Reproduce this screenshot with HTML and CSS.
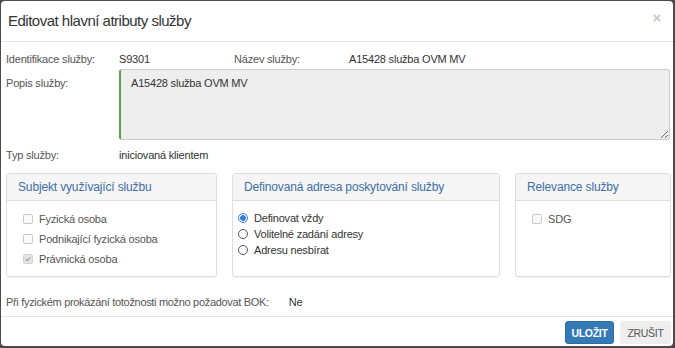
FILE: index.html
```html
<!DOCTYPE html>
<html lang="cs">
<head>
<meta charset="utf-8">
<link rel="stylesheet" href="styles.css">
</head>
<body>
<div class="modal">
  <div class="modal-header">
    <h4 class="modal-title">Editovat hlavní atributy služby</h4>
    <span class="close">×</span>
  </div>
  <div class="modal-body">
    <div class="row4">
      <span class="lbl">Identifikace služby:</span>
      <span class="val">S9301</span>
      <span class="lbl">Název služby:</span>
      <span class="val">A15428 služba OVM MV</span>
    </div>
    <div class="row-desc">
      <span class="lbl lbl-desc">Popis služby:</span>
      <textarea class="desc" readonly>A15428 služba OVM MV</textarea>
    </div>
    <div class="row2">
      <span class="lbl">Typ služby:</span>
      <span class="val">iniciovaná klientem</span>
    </div>
    <div class="panels">
      <div class="panel">
        <div class="panel-heading">Subjekt využívající službu</div>
        <div class="panel-body">
          <div class="chk-row"><span class="chk"></span>Fyzická osoba</div>
          <div class="chk-row"><span class="chk"></span>Podnikající fyzická osoba</div>
          <div class="chk-row"><span class="chk checked"><svg viewBox="0 0 10 10" width="10" height="10"><path d="M2.2 5.2 L4.2 7.2 L7.9 2.8" fill="none" stroke="#9a9a9a" stroke-width="1.4"/></svg></span>Právnická osoba</div>
        </div>
      </div>
      <div class="panel">
        <div class="panel-heading">Definovaná adresa poskytování služby</div>
        <div class="panel-body radios">
          <div class="radio-row"><span class="radio on"></span>Definovat vždy</div>
          <div class="radio-row"><span class="radio"></span>Volitelné zadání adresy</div>
          <div class="radio-row"><span class="radio"></span>Adresu nesbírat</div>
        </div>
      </div>
      <div class="panel">
        <div class="panel-heading">Relevance služby</div>
        <div class="panel-body">
          <div class="chk-row"><span class="chk"></span>SDG</div>
        </div>
      </div>
    </div>
    <div class="row-bok">
      <span class="lbl bok-lbl">Při fyzickém prokázání totožnosti možno požadovat BOK:</span>
      <span class="val">Ne</span>
    </div>
  </div>
  <div class="modal-footer">
    <button class="btn btn-primary">ULOŽIT</button>
    <button class="btn btn-default">ZRUŠIT</button>
  </div>
</div>
</body>
</html>
```

FILE: styles.css
```css
* { box-sizing: border-box; }
html, body { margin: 0; padding: 0; }
body {
  background: #4b4b4b;
  width: 675px;
  height: 348px;
  padding: 1px 2px 2px 1px;
  font-family: "Liberation Sans", Arial, sans-serif;
  font-size: 11px;
  letter-spacing: -0.2px;
  color: #333;
  overflow: hidden;
}
.modal {
  background: #fff;
  border-radius: 4px;
  width: 672px;
  height: 345px;
  display: flex;
  flex-direction: column;
}
.modal-header {
  height: 41px;
  border-bottom: 1px solid #e5e5e5;
  display: flex;
  align-items: center;
  justify-content: space-between;
  padding: 0 12px 2px 7px;
}
.modal-title {
  margin: 0;
  font-size: 15px;
  font-weight: normal;
  color: #333;
  letter-spacing: -0.5px;
}
.close {
  color: #c8c8c8;
  font-size: 15px;
  font-weight: bold;
  margin-top: -6px;
}
.modal-body {
  flex: 1;
  padding: 9px 2px 0 5px;
}
.lbl { color: #555; }
.val { color: #333; }
.row4 {
  display: grid;
  grid-template-columns: 113px 115px 115px 1fr;
  line-height: 16px;
  height: 16px;
}
.row-desc {
  display: grid;
  grid-template-columns: 113px 1fr;
  margin-top: 2px;
}
.lbl-desc { padding-top: 6px; line-height: 16px; }
.desc {
  display: block;
  width: 551px;
  height: 71px;
  background: #eee;
  border: 1px solid #ccc;
  border-left: 2px solid #5e9c4f;
  border-radius: 3px;
  padding: 5px 10px;
  font-family: "Liberation Sans", Arial, sans-serif;
  font-size: 11px;
  letter-spacing: -0.2px;
  line-height: 16px;
  color: #333;
  resize: vertical;
  outline: none;
  margin: 0;
}
.row2 {
  display: grid;
  grid-template-columns: 113px 1fr;
  line-height: 16px;
  margin-top: 7px;
}
.panels {
  display: grid;
  grid-template-columns: 211px 268px 156px;
  column-gap: 15px;
  margin-top: 10px;
  height: 104px;
}
.panel {
  border: 1px solid #ddd;
  border-radius: 3px;
  display: flex;
  flex-direction: column;
  box-shadow: 0 1px 1px rgba(0,0,0,0.05);
}
.panel-heading {
  background: #f5f5f5;
  border-bottom: 1px solid #ddd;
  height: 27px;
  line-height: 26px;
  padding: 0 11px;
  color: #3f6fa6;
  font-size: 12px;
  letter-spacing: -0.15px;
  border-radius: 3px 3px 0 0;
}
.panel-body {
  padding: 8px 11px 0 16px;
}
.chk-row {
  display: flex;
  align-items: center;
  height: 20px;
  line-height: 20px;
  color: #555;
}
.chk {
  width: 10px;
  height: 10px;
  border: 1px solid #c9c9c9;
  border-radius: 2px;
  background: #fafafa;
  margin-right: 6px;
  display: inline-flex;
  align-items: center;
  justify-content: center;
  flex: none;
}
.chk.checked { background: #e4e4e4; border-color: #d2d2d2; }
.chk svg { display: block; }
.radios { padding: 9px 8px 0 5px; }
.radio-row {
  display: flex;
  align-items: center;
  height: 16px;
  line-height: 16px;
  color: #333;
}
.radio {
  width: 10px;
  height: 10px;
  border: 1px solid #555;
  border-radius: 50%;
  margin-right: 6px;
  flex: none;
  background: #fff;
}
.radio.on {
  border-color: #3b7ddd;
  background: radial-gradient(circle, #3b7ddd 0 2.6px, #fff 3.2px);
}
.row-bok {
  display: flex;
  line-height: 16px;
  margin-top: 17px;
}
.bok-lbl { letter-spacing: -0.32px; }
.row-bok .val { margin-left: 20px; }
.modal-footer {
  border-top: 1px solid #e5e5e5;
  height: 30px;
  display: flex;
  justify-content: flex-end;
  align-items: flex-start;
  gap: 6px;
  padding: 4px 2px 0 0;
}
.btn {
  height: 23px;
  border-radius: 3px;
  font-family: "Liberation Sans", Arial, sans-serif;
  font-size: 10.5px;
  padding: 0;
  border: 1px solid transparent;
  cursor: pointer;
  letter-spacing: -0.3px;
}
.btn-primary {
  background: #337ab7;
  border-color: #2e6da4;
  color: #fff;
  font-weight: bold;
  width: 49px;
}
.btn-default {
  background: #eee;
  border-color: #eee;
  color: #555;
  width: 51px;
}
```
